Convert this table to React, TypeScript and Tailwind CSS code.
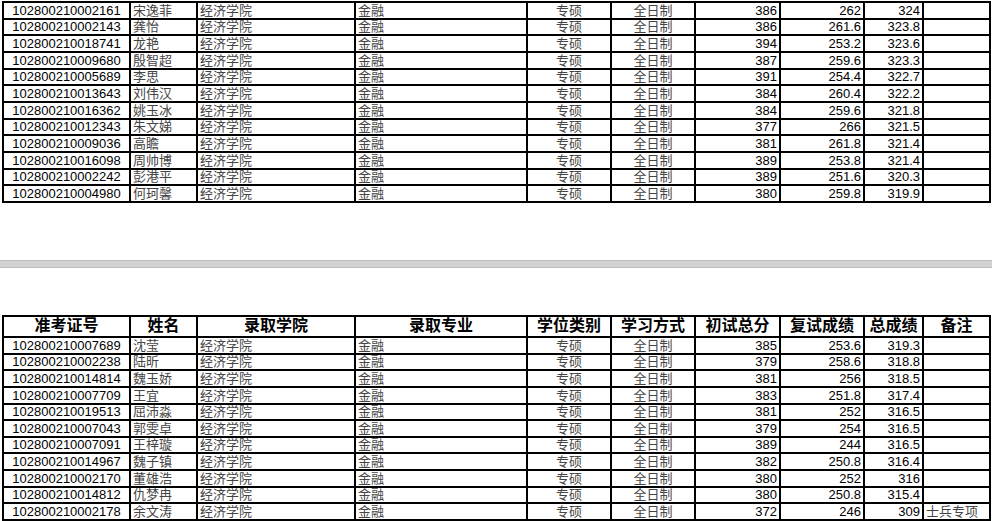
import React from "react";

type Row = {
  id: string;
  name: string;
  first: string;
  retest: string;
  total: string;
  note?: string;
};

const topRows: Row[] = [
  { id: "102800210002161", name: "宋逸菲", first: "386", retest: "262", total: "324" },
  { id: "102800210002143", name: "龚怡", first: "386", retest: "261.6", total: "323.8" },
  { id: "102800210018741", name: "龙艳", first: "394", retest: "253.2", total: "323.6" },
  { id: "102800210009680", name: "殷智超", first: "387", retest: "259.6", total: "323.3" },
  { id: "102800210005689", name: "李思", first: "391", retest: "254.4", total: "322.7" },
  { id: "102800210013643", name: "刘伟汉", first: "384", retest: "260.4", total: "322.2" },
  { id: "102800210016362", name: "姚玉冰", first: "384", retest: "259.6", total: "321.8" },
  { id: "102800210012343", name: "朱文娣", first: "377", retest: "266", total: "321.5" },
  { id: "102800210009036", name: "高瞻", first: "381", retest: "261.8", total: "321.4" },
  { id: "102800210016098", name: "周帅博", first: "389", retest: "253.8", total: "321.4" },
  { id: "102800210002242", name: "彭港平", first: "389", retest: "251.6", total: "320.3" },
  { id: "102800210004980", name: "何珂馨", first: "380", retest: "259.8", total: "319.9" },
];

const bottomRows: Row[] = [
  { id: "102800210007689", name: "沈莹", first: "385", retest: "253.6", total: "319.3" },
  { id: "102800210002238", name: "陆昕", first: "379", retest: "258.6", total: "318.8" },
  { id: "102800210014814", name: "魏玉娇", first: "381", retest: "256", total: "318.5" },
  { id: "102800210007709", name: "王宜", first: "383", retest: "251.8", total: "317.4" },
  { id: "102800210019513", name: "屈沛淼", first: "381", retest: "252", total: "316.5" },
  { id: "102800210007043", name: "郭雯卓", first: "379", retest: "254", total: "316.5" },
  { id: "102800210007091", name: "王梓璇", first: "389", retest: "244", total: "316.5" },
  { id: "102800210014967", name: "魏子镇", first: "382", retest: "250.8", total: "316.4" },
  { id: "102800210002170", name: "董雄浩", first: "380", retest: "252", total: "316" },
  { id: "102800210014812", name: "仇梦冉", first: "380", retest: "250.8", total: "315.4" },
  { id: "102800210002178", name: "余文涛", first: "372", retest: "246", total: "309", note: "士兵专项" },
];

const headers = ["准考证号", "姓名", "录取学院", "录取专业", "学位类别", "学习方式", "初试总分", "复试成绩", "总成绩", "备注"];

const cols = "grid grid-cols-[127px_67px_158px_172px_84px_84px_85px_84px_59px_67px]";
const cell = "border-r-2 border-black px-[2px] flex items-end pb-[1px] leading-[13px] whitespace-nowrap overflow-hidden";
const cjk = "text-[#454545]";

function DataRow({ r }: { r: Row }) {
  return (
    <div className={`${cols} h-[16.67px] border-b-2 border-black text-[13px]`}>
      <div className={`${cell} justify-center text-black`}>{r.id}</div>
      <div className={`${cell} ${cjk}`}>{r.name}</div>
      <div className={`${cell} ${cjk}`}>经济学院</div>
      <div className={`${cell} ${cjk}`}>金融</div>
      <div className={`${cell} ${cjk} justify-center`}>专硕</div>
      <div className={`${cell} ${cjk} justify-center`}>全日制</div>
      <div className={`${cell} justify-end text-black`}>{r.first}</div>
      <div className={`${cell} justify-end text-black`}>{r.retest}</div>
      <div className={`${cell} justify-end text-black`}>{r.total}</div>
      <div className={`${cell} ${cjk}`}>{r.note ?? ""}</div>
    </div>
  );
}

function Sheet({ rows, withHeader }: { rows: Row[]; withHeader?: boolean }) {
  return (
    <div className="ml-[2px] w-[989px] border-t-2 border-l-2 border-black">
      {withHeader && (
        <div className={`${cols} h-[21px] border-b-2 border-black`}>
          {headers.map((h) => (
            <div
              key={h}
              className="border-r-2 border-black flex items-center justify-center text-[16px] font-bold leading-[16px] text-black whitespace-nowrap"
            >
              {h}
            </div>
          ))}
        </div>
      )}
      {rows.map((r) => (
        <DataRow key={r.id} r={r} />
      ))}
    </div>
  );
}

export default function App() {
  return (
    <div className="w-[992px] h-[521px] overflow-hidden bg-white font-['Liberation_Sans','Noto_Sans_CJK_SC',sans-serif]">
      <div className="pt-[1px]">
        <Sheet rows={topRows} />
      </div>
      {/* page gap */}
      <div className="mt-[57px] h-[8px] bg-[#d3d3d3] border-t border-b border-[#bcbcbc]" />
      <div className="mt-[47px]">
        <Sheet rows={bottomRows} withHeader />
      </div>
    </div>
  );
}
